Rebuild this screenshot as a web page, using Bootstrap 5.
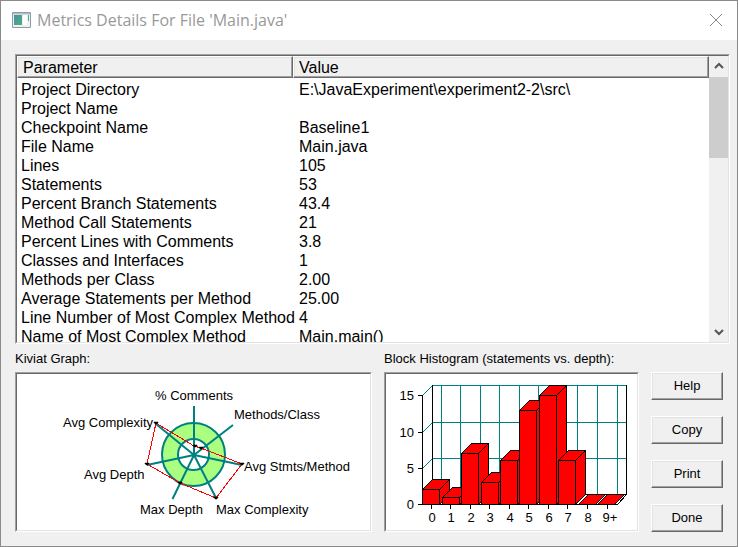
<!DOCTYPE html>
<html lang="en">
<head>
<meta charset="utf-8">
<meta name="viewport" content="width=device-width, initial-scale=1">
<title>Metrics Details For File 'Main.java'</title>
<link href="https://cdn.jsdelivr.net/npm/bootstrap@5.3.0/dist/css/bootstrap.min.css" rel="stylesheet">
<style>
  body { font-family: "Liberation Sans", Arial, sans-serif; font-size: 13px; line-height: 16px; color: #000; background: #f0f0f0; }
  .dialog { border: 1px solid #8a8a8a; }
  .titlebar { height: 39px; gap: 6px; padding: 0 14px 0 11px; }
  .titlebar h1 { font-family: "Open Sans", "Noto Sans", sans-serif; font-size: 16px; line-height: 24px; color: #999; font-weight: 400; }
  .titlebar button { line-height: 0; }
  .dialog-main { padding: 14px 7px 14px 14px; min-height: 0; }
  .sunken { border: 1px solid; border-color: #a0a0a0 #fff #fff #a0a0a0; background: #fff; }
  .sunken-inner { border: 1px solid; border-color: #696969 #e3e3e3 #e3e3e3 #696969; }
  .metrics { font-size: 16px; line-height: 19px; table-layout: fixed; border-collapse: separate; border-spacing: 0; }
  .metrics col:first-child { width: 276px; }
  .metrics th { font-weight: 400; background: #f0f0f0; height: 22px; line-height: 18px; padding: 2px 5px 0; border: 1px solid; border-color: #fff #696969 #696969 #fff; box-shadow: inset -1px -1px #a0a0a0, inset 1px 1px #e3e3e3; }
  .metrics td { height: 19px; padding: 0 4px; white-space: nowrap; }
  .metrics td + td { padding-left: 6px; }
  .metrics tbody tr:first-child td { height: 21px; padding-top: 2px; }
  .scroller { width: 19px; background: #f0f0f0; }
  .scroller button { height: 21px; line-height: 0; }
  .thumb { height: 81px; background: #cdcdcd; }
  .captions { height: 28px; padding-top: 7px; }
  .panes { display: grid; grid-template-columns: 7fr 5fr 72px; column-gap: 12px; padding-right: 7px; }
  .chart { height: 156px; }
  .chart text { font-size: 13px; }
  .push { height: 28px; font-size: 13px; line-height: 16px; color: #000; background: #f0f0f0; border: 1px solid; border-color: #fff #696969 #696969 #fff; box-shadow: inset -1px -1px #a0a0a0, inset 1px 1px #e3e3e3; }
  .push-list { gap: 16px; }
</style>
</head>
<body>
<div class="dialog d-flex flex-column vh-100">
  <header class="titlebar bg-white d-flex align-items-center">
    <svg width="19" height="16" viewBox="0 0 19 16" aria-hidden="true">
      <defs><linearGradient id="pane" x2="1" y2="1"><stop stop-color="#4a90a8"/><stop offset="1" stop-color="#4fae78"/></linearGradient></defs>
      <path d="M.5.5h18v15H.5z" fill="#eef1f3" stroke="#909aa2"/>
      <path d="M1 1h17v1.500H1z" fill="#b5bec6"/>
      <path d="M2 3h8v10H2z" fill="url(#pane)"/>
      <path d="M11 3h4v10h-4z" fill="#fff"/>
      <path d="M16 3h1v6h-1z" fill="#4fae90"/>
    </svg>
    <h1 class="mb-0 flex-grow-1">Metrics Details For File 'Main.java'</h1>
    <button type="button" class="border-0 bg-transparent p-0" aria-label="Close">
      <svg width="14" height="14" viewBox="0 0 14 14" aria-hidden="true"><path d="M1 1l12 12M13 1L1 13" stroke="#888" fill="none"/></svg>
    </button>
  </header>

  <main class="dialog-main d-flex flex-column flex-grow-1">
    <section class="sunken d-flex flex-grow-1 overflow-hidden">
      <div class="sunken-inner d-flex flex-grow-1 overflow-hidden">
        <div class="flex-grow-1 overflow-hidden">
          <table class="metrics w-100">
            <colgroup><col><col></colgroup>
            <thead><tr><th scope="col">Parameter</th><th scope="col">Value</th></tr></thead>
            <tbody>
              <tr><td>Project Directory</td><td>E:\JavaExperiment\experiment2-2\src\</td></tr>
              <tr><td>Project Name</td><td></td></tr>
              <tr><td>Checkpoint Name</td><td>Baseline1</td></tr>
              <tr><td>File Name</td><td>Main.java</td></tr>
              <tr><td>Lines</td><td>105</td></tr>
              <tr><td>Statements</td><td>53</td></tr>
              <tr><td>Percent Branch Statements</td><td>43.4</td></tr>
              <tr><td>Method Call Statements</td><td>21</td></tr>
              <tr><td>Percent Lines with Comments</td><td>3.8</td></tr>
              <tr><td>Classes and Interfaces</td><td>1</td></tr>
              <tr><td>Methods per Class</td><td>2.00</td></tr>
              <tr><td>Average Statements per Method</td><td>25.00</td></tr>
              <tr><td>Line Number of Most Complex Method</td><td>4</td></tr>
              <tr><td>Name of Most Complex Method</td><td>Main.main()</td></tr>
            </tbody>
          </table>
        </div>
        <div class="scroller d-flex flex-column flex-shrink-0">
          <button type="button" class="border-0 bg-transparent p-0" aria-label="Scroll up">
            <svg width="10" height="8" viewBox="0 0 10 8" aria-hidden="true"><path d="M1 6l4-4 4 4" fill="none" stroke="#555" stroke-width="2"/></svg>
          </button>
          <div class="thumb"></div>
          <button type="button" class="border-0 bg-transparent p-0 mt-auto" aria-label="Scroll down">
            <svg width="10" height="8" viewBox="0 0 10 8" aria-hidden="true"><path d="M1 2l4 4 4-4" fill="none" stroke="#555" stroke-width="2"/></svg>
          </button>
        </div>
      </div>
    </section>

    <div class="panes captions">
      <span>Kiviat Graph:</span>
      <span class="text-nowrap">Block Histogram (statements vs. depth):</span>
    </div>

    <div class="panes">
      <div class="sunken"><div class="sunken-inner">
        <svg class="chart d-block w-100" viewBox="17 374 353 156" role="img" aria-label="Kiviat graph">
          <circle cx="193.500" cy="454.500" r="24" fill="none" stroke="#aaff80" stroke-width="16"/>
          <g fill="none" stroke="#008080" stroke-width="2">
            <circle cx="193.500" cy="454.500" r="31.500"/>
            <circle cx="193.500" cy="454.500" r="15.500"/>
            <path d="M194 455V406M194 455L233 425M194 455L242 465M194 455L216 498M194 455L172.500 499M194 455L147 465M194 455L156 424"/>
          </g>
          <path d="M156 423L194 446L201 448L242 464L216 498L180 483L147 464z" fill="none" stroke="#f00" shape-rendering="crispEdges"/>
          <path d="M154 422h4v1h-1v1h-2v-1h-1zM193 445h4v1h-1v1h-2v-1h-1zM199 447h4v1h-1v1h-2v-1h-1zM240 463h4v1h-1v1h-2v-1h-1zM214 497h4v1h-1v1h-2v-1h-1zM178 482h4v1h-1v1h-2v-1h-1zM145 463h4v1h-1v1h-2v-1h-1z" stroke="#000" stroke-width=".5"/>
          <text x="155" y="400">% Comments</text>
          <text x="234" y="419">Methods/Class</text>
          <text x="63" y="427">Avg Complexity</text>
          <text x="84" y="479">Avg Depth</text>
          <text x="244" y="471">Avg Stmts/Method</text>
          <text x="140" y="514">Max Depth</text>
          <text x="216" y="514">Max Complexity</text>
        </svg>
      </div></div>

      <div class="sunken"><div class="sunken-inner">
        <svg class="chart d-block w-100" viewBox="386 374 251 156" role="img" aria-label="Block histogram">
          <g shape-rendering="crispEdges">
          <g fill="none" stroke="#008080">
            <path d="M432 385.500H626M432 422.500H626M432 458.500H626M441.500 385V494M460.500 385V494M480.500 385V494M499.500 385V494M519.500 385V494M538.500 385V494M558.500 385V494M577.500 385V494M597.500 385V494M617.500 385V494"/>
            <path d="M422.500 395.500l10-10M422.500 432.500l10-10M422.500 468.500l10-10"/>
          </g>
          <path d="M422.500 395V504.500H617.500L626.500 494.500V385M432.500 385V494.500H626M422.500 504.500l10-10M418 395.500h5M418 432.500h5M418 468.500h5M418 504.500h5M431.500 504v5M450.500 504v5M470.500 504v5M489.500 504v5M509.500 504v5M528.500 504v5M548.500 504v5M567.500 504v5M587.500 504v5M607.500 504v5" fill="none" stroke="#000"/>
          <g fill="#f00" stroke="#000" stroke-linejoin="round">
            <path d="M422.500 504.500v-15l10-10h17v15l-10 10zM422.500 489.500h17v15M439.500 489.500l10-10"/>
            <path d="M442.500 504.500v-7l10-10h17v7l-10 10zM442.500 497.500h17v7M459.500 497.500l10-10"/>
            <path d="M461.500 504.500v-51l10-10h17v51l-10 10zM461.500 453.500h17v51M478.500 453.500l10-10"/>
            <path d="M481.500 504.500v-22l10-10h17v22l-10 10zM481.500 482.500h17v22M498.500 482.500l10-10"/>
            <path d="M500.500 504.500v-44l10-10h17v44l-10 10zM500.500 460.500h17v44M517.500 460.500l10-10"/>
            <path d="M519.500 504.500v-94l10-10h17v94l-10 10zM519.500 410.500h17v94M536.500 410.500l10-10"/>
            <path d="M539.500 504.500v-109l10-10h17v109l-10 10zM539.500 395.500h17v109M556.500 395.500l10-10"/>
            <path d="M558.500 504.500v-44l10-10h17v44l-10 10zM558.500 460.500h17v44M575.500 460.500l10-10"/>
            <path d="M578.500 504.500l10-10h17l-10 10zM597.500 504.500l10-10h17l-10 10z"/>
          </g>
          </g>
          <g text-anchor="end">
            <text x="414" y="400">15</text><text x="414" y="437">10</text><text x="414" y="473">5</text><text x="414" y="509">0</text>
          </g>
          <g text-anchor="middle">
            <text x="432" y="522">0</text><text x="451" y="522">1</text><text x="471" y="522">2</text><text x="490" y="522">3</text><text x="510" y="522">4</text>
            <text x="529" y="522">5</text><text x="549" y="522">6</text><text x="568" y="522">7</text><text x="588" y="522">8</text><text x="610" y="522">9+</text>
          </g>
        </svg>
      </div></div>

      <div class="push-list d-flex flex-column">
        <button type="button" class="push p-0">Help</button>
        <button type="button" class="push p-0">Copy</button>
        <button type="button" class="push p-0">Print</button>
        <button type="button" class="push p-0">Done</button>
      </div>
    </div>
  </main>
</div>
<script src="https://cdn.jsdelivr.net/npm/bootstrap@5.3.0/dist/js/bootstrap.bundle.min.js"></script>
</body>
</html>
